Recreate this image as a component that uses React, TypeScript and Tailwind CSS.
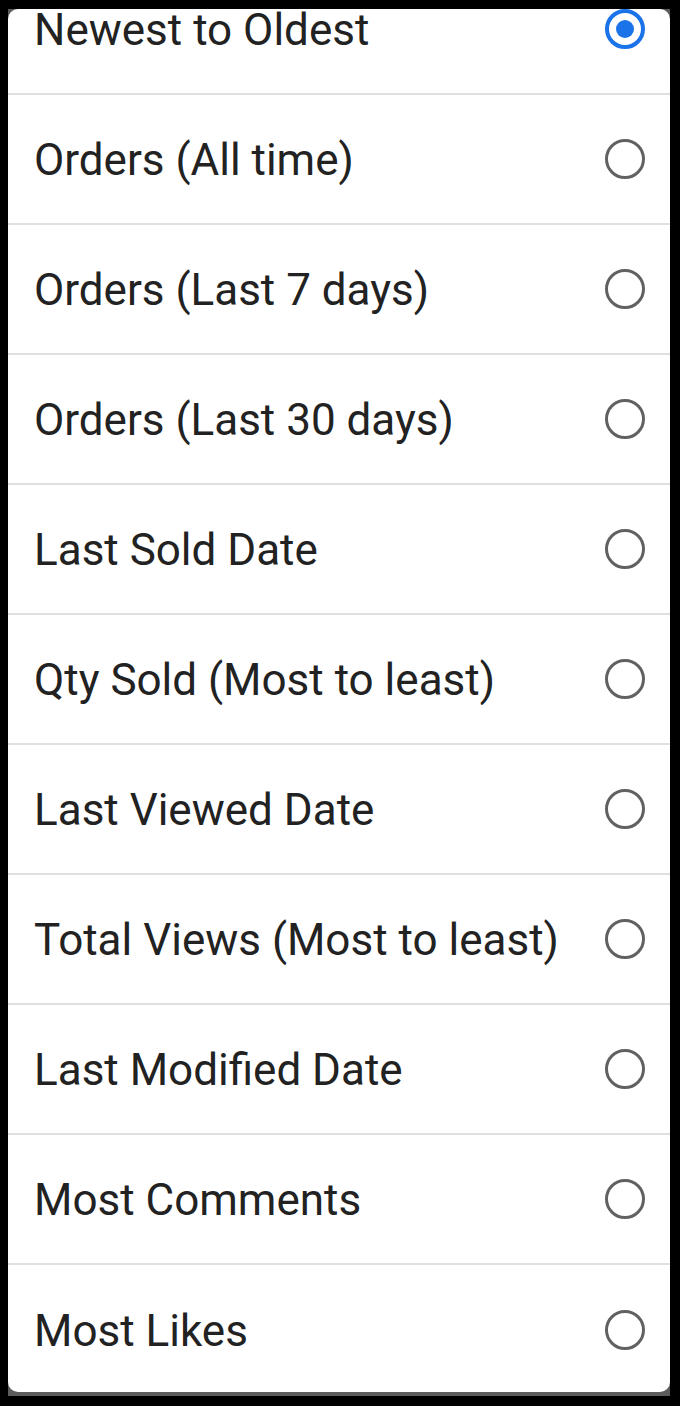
const options = [
  'Newest to Oldest',
  'Orders (All time)',
  'Orders (Last 7 days)',
  'Orders (Last 30 days)',
  'Last Sold Date',
  'Qty Sold (Most to least)',
  'Last Viewed Date',
  'Total Views (Most to least)',
  'Last Modified Date',
  'Most Comments',
  'Most Likes',
]

function Radio({ checked }: { checked: boolean }) {
  if (checked) {
    return (
      <span className="w-[40px] h-[40px] rounded-full border-[4px] border-[#1a73e8] flex items-center justify-center shrink-0">
        <span className="w-[18px] h-[18px] rounded-full bg-[#1a73e8]" />
      </span>
    )
  }
  return <span className="w-[40px] h-[40px] rounded-full border-[3.5px] border-[#616161] shrink-0" />
}

export default function App() {
  return (
    <div className="w-[680px] h-[1406px] bg-black pt-[9px] pl-[8px] pr-[10px] pb-[10px] font-['Roboto',sans-serif]">
      <div className="h-full bg-[#5c5c5c] pb-[4px]">
        <div className="h-full bg-white rounded-[10px] overflow-hidden">
          <div className="-mt-[44px]">
            {options.map((label, i) => (
              <div
                key={label}
                className={`h-[130px] flex items-center justify-between pl-[26px] pr-[25px] ${i < options.length - 1 ? 'border-b-2 border-[#e0e0e0]' : ''}`}
              >
                <span className="text-[44px] text-[#222222] leading-none pt-[2px]">{label}</span>
                <Radio checked={i === 0} />
              </div>
            ))}
          </div>
        </div>
      </div>
    </div>
  )
}
